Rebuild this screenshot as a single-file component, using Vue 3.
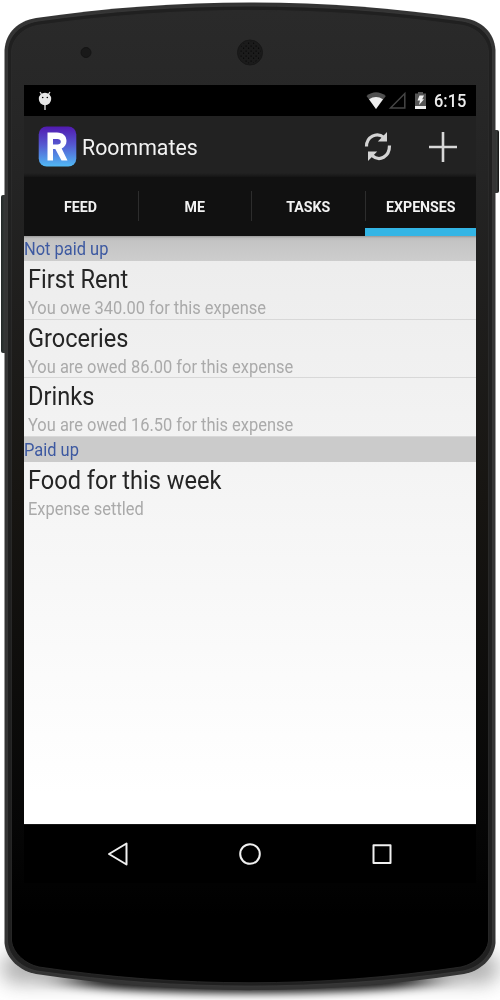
<script setup>
const tabs = ['FEED', 'ME', 'TASKS', 'EXPENSES']
const groups = [
  {
    title: 'Not paid up',
    items: [
      { name: 'First Rent', detail: 'You owe 340.00 for this expense' },
      { name: 'Groceries', detail: 'You are owed 86.00 for this expense' },
      { name: 'Drinks', detail: 'You are owed 16.50 for this expense' },
    ],
  },
  { title: 'Paid up', items: [{ name: 'Food for this week', detail: 'Expense settled' }] },
]
</script>

<template>
  <div class="phone">
    <svg class="body" viewBox="0 0 500 1000" width="500" height="1000" aria-hidden="true">
      <defs>
        <linearGradient id="face" x1="0" y1="0" x2="0" y2="1">
          <stop offset="0" stop-color="#2a2a2a" />
          <stop offset="0.17" stop-color="#242424" />
          <stop offset="0.5" stop-color="#171512" />
          <stop offset="0.84" stop-color="#060606" />
          <stop offset="0.93" stop-color="#000" />
          <stop offset="1" stop-color="#000" />
        </linearGradient>
        <linearGradient id="key" x1="0" y1="0" x2="1" y2="0">
          <stop offset="0" stop-color="#222827" />
          <stop offset="0.6" stop-color="#373a39" />
          <stop offset="1" stop-color="#111" />
        </linearGradient>
        <pattern id="holes" width="5" height="5" patternUnits="userSpaceOnUse">
          <rect x="0.5" y="0.5" width="1.200" height="1.200" fill="#050505" />
          <rect x="3" y="2.6" width="1.200" height="1.200" fill="#050505" />
        </pattern>
        <filter id="wide" x="-20%" y="-100%" width="140%" height="300%">
          <feGaussianBlur stdDeviation="10 9" />
        </filter>
        <filter id="soft" x="-20%" y="-100%" width="140%" height="300%">
          <feGaussianBlur stdDeviation="20 4" />
        </filter>
      </defs>
      <rect x="2" y="952" width="496" height="32" rx="14" fill="#777" opacity=".55" filter="url(#wide)" />
      <ellipse cx="250" cy="981" rx="180" ry="12" fill="#000" opacity=".9" filter="url(#soft)" />
      <rect x="1" y="195" width="6" height="158" rx="2" fill="url(#key)" />
      <rect x="493" y="130" width="6" height="63" rx="2" fill="url(#key)" />
      <path d="M4.5 50 C6 32 18 21 36 18 C178 -2.8 322 -2.8 464 18 C482 21 494 32 495.5 50 V943 C494 959 480 971 464 974 C322 995.500 178 995.500 36 974 C20 971 6 959 4.500 943Z" fill="#343434" />
      <path d="M7.500 50 C9 35 20 24 38 21 C179 1 321 1 462 21 C480 24 491 35 492.500 50 V942 C491 957 478 968 463 971 C321 991 179 991 37 971 C22 968 9 957 7.500 942Z" fill="#202020" stroke="#3c3c3c" stroke-width=".7" />
      <path d="M11.500 52 C12 39 23 27 40 25 C180 5.500 320 5.500 460 25 C477 27 488 39 488.500 52 V941 C487 953 475 964 461 967 C320 988 180 988 39 967 C25 964 13 953 11.500 941Z" fill="url(#face)" stroke="#2c2c2c" stroke-width=".8" />
      <circle cx="86" cy="52.500" r="5" fill="#191919" stroke="#141414" />
      <circle cx="250" cy="52.500" r="12.500" fill="#1b1b1b" stroke="#171717" />
      <circle cx="250" cy="52.500" r="11" fill="url(#holes)" />
    </svg>

    <main class="screen">
      <div class="status">
        <svg class="bug" viewBox="0 0 14 22" width="14" height="22">
          <path d="M2 2 4 5M12 2 10 5M7 15v5" stroke="#ddd" stroke-width="1.300" />
          <circle cx="7" cy="9" r="6.200" fill="#e6e6e6" />
          <circle cx="4.700" cy="7.500" r=".8" /><circle cx="9.300" cy="7.500" r=".8" />
        </svg>
        <svg class="signals" viewBox="0 0 64 20" width="64" height="20">
          <path d="M0.500 5 Q10 -2.500 19.800 5 L10 18Z" fill="#505050" />
          <path d="M3 8.200 Q10 3.800 17 8.200 L10 18Z" fill="#efefef" />
          <path d="M24.500 17 38.800 2.500V17Z" fill="none" stroke="#454545" stroke-width="1.500" />
          <path d="M49 2.500h3V1h5v1.500h3V18H49Z" fill="#555" />
          <path d="M49 15h11v3H49Z" fill="#eee" />
          <path d="M53.500 4.500h4.500l-1.800 3.700H58l-5 5.800 1-4.500h-2.500Z" fill="#f1f1f1" />
        </svg>
        <span class="clock">6:15</span>
      </div>

      <header class="bar">
        <svg class="logo" viewBox="0 0 39 41" width="39" height="41">
          <defs>
            <linearGradient id="logo-fill" x1="0" y1="0" x2="0" y2="1">
              <stop offset="0" stop-color="#5119b0" />
              <stop offset=".45" stop-color="#5558d0" />
              <stop offset="1" stop-color="#51b9f5" />
            </linearGradient>
          </defs>
          <rect x=".7" y=".5" width="37.600" height="40" rx="8" fill="url(#logo-fill)" />
          <path fill-rule="evenodd" d="M9.500 6.500H19C25 6.500 28.500 10 28.500 15C28.500 18.500 26.500 21.300 23.700 22.500L29.500 34.500H23.500L17.300 23H15V34.500H9.500ZM15 13V18.500H19.500C21.500 18.500 22.800 17.500 22.800 15.700C22.800 14 21.500 13 19.500 13Z" fill="#fff" />
        </svg>
        <h1>Roommates</h1>
        <svg class="sync" viewBox="0 0 28 32" width="28" height="32">
          <path d="M2.500 15.500C2.500 6 12.500 0.500 20 6.500M25.500 14.500C25.500 26 15.500 31 8 24.500" fill="none" stroke="#d4d4d4" stroke-width="3.200" />
          <path d="M23 1v9.500h-9.200ZM4 30v-9.500h9.200Z" fill="#d4d4d4" />
        </svg>
        <svg class="plus" viewBox="0 0 28 30" width="28" height="30">
          <path d="M14 0V30M0 15H28" stroke="#d8d8d8" stroke-width="2.600" />
        </svg>
      </header>

      <nav class="tabs">
        <div v-for="(tab, i) in tabs" :key="tab" class="tab" :class="{ active: i === 3 }"><span>{{ tab }}</span></div>
      </nav>

      <section class="list">
        <template v-for="group in groups" :key="group.title">
          <h2><span>{{ group.title }}</span></h2>
          <article v-for="item in group.items" :key="item.name">
            <h3>{{ item.name }}</h3>
            <p>{{ item.detail }}</p>
          </article>
        </template>
      </section>

      <footer class="nav">
        <svg viewBox="0 0 24 26" width="24" height="26"><path d="M3 13 20.500 2.500V23.500Z" /></svg>
        <svg viewBox="0 0 24 26" width="24" height="26"><circle cx="12" cy="13" r="9.800" /></svg>
        <svg viewBox="0 0 24 26" width="24" height="26"><rect x="3.500" y="4.300" width="17" height="17.700" /></svg>
      </footer>
    </main>
  </div>
</template>

<style>
body { margin: 0; background: #fff; }
</style>

<style scoped>
.phone {
  position: relative;
  width: 500px;
  height: 1000px;
  box-sizing: border-box;
  padding: 85px 24px 0;
  overflow: hidden;
  font-family: Roboto, "Liberation Sans", sans-serif;
}
.body { position: absolute; inset: 0; }
.screen { position: relative; width: 452px; height: 799px; display: flex; flex-direction: column; }
svg { display: block; flex: none; }
h1, h2, h3, p { margin: 0; font-weight: 400; white-space: nowrap; }
h1, h3, p, h2 span, .clock { transform: scaleX(.935); transform-origin: 0 50%; }
.status { height: 31px; flex: none; background: #000; display: flex; align-items: center; }
.bug { margin-left: 14px; }
.signals { margin-left: auto; margin-right: 4px; }
.clock { color: #ececec; font-size: 17.6px; font-weight: 500; width: 42px; line-height: 31px; padding-top: 2px; }
.bar { height: 61px; flex: none; box-sizing: border-box; background: linear-gradient(#222 0 57px, #151515 61px); display: flex; align-items: center; padding-left: 14px; }
.logo { margin-right: 4.5px; }
h1 { color: #f2f2f2; font-size: 22.8px; line-height: 30px; padding-top: 2px; }
.sync { margin-left: auto; margin-right: 37px; }
.plus { margin-right: 19px; }
.tabs { height: 59px; flex: none; background: #111; display: grid; grid-template-columns: 115px 113px 114px 110px; }
.tab {
  display: flex;
  align-items: center;
  justify-content: center;
  box-sizing: border-box;
  padding-right: 2px;
  color: #f2f2f2;
  font-size: 15px;
  font-weight: 700;
  background: linear-gradient(#2d2d2d, #2d2d2d) right 14px / 1px 30px no-repeat;
}
.tab span { transform: scaleX(.945); }
.tab.active { background: linear-gradient(#33b5e5, #33b5e5) bottom / 100% 8px no-repeat; margin-left: -1px; padding: 0 0 0 1px; }
.list { height: 588px; flex: none; background: linear-gradient(#ececec, #f5f5f5 45%, #fff 95%); }
h2 { height: 25px; box-sizing: border-box; background: #cbcbcb; color: #3d59a1; font-size: 17.6px; line-height: 26px; }
h2 span { display: block; }
h2:first-child { background: linear-gradient(#999, #bcbcbc 2px, #c4c4c4 5px, #cdcdcd); }
article { height: 58.5px; box-sizing: border-box; padding: 3px 0 0 4px; border-bottom: 1px solid #d8d8d8; }
article:last-child { border: 0; }
h3 { color: #252525; font-size: 25px; line-height: 32px; transform: scaleX(.943); }
p { color: #aaa; font-size: 17.6px; line-height: 24px; }
.nav { height: 59px; flex: none; background: #000; display: flex; justify-content: center; align-items: center; gap: 108px; border-top: 1px solid #161616; box-sizing: border-box; }
.nav svg { fill: none; stroke: #f0f0f0; stroke-width: 2; stroke-linejoin: round; }
</style>
